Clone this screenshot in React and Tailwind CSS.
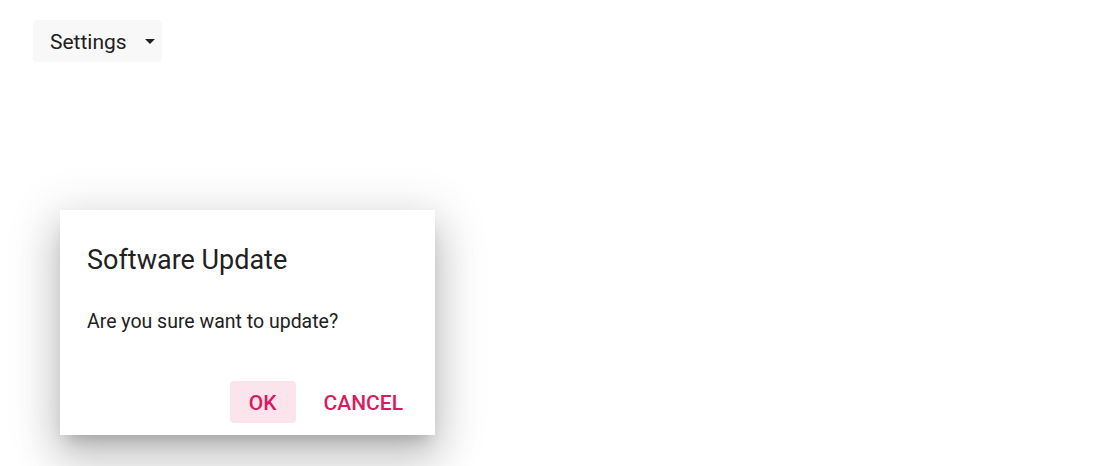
import { memo } from 'react';

const font = { fontFamily: 'Roboto, "Liberation Sans", sans-serif' };

// caret for the dropdown trigger
const Caret = () => (
  <svg width="10" height="5" viewBox="0 0 10 5" className="ml-[18px]">
    <path d="M0 0 L10 0 L5 5 Z" fill="#212121" />
  </svg>
);

const UpdateDialog = memo(() => (
  <div className="w-[375px] h-[225px] bg-white flex flex-col shadow-[0_11px_15px_-7px_rgba(0,0,0,0.2),0_24px_38px_3px_rgba(0,0,0,0.14),0_9px_46px_8px_rgba(0,0,0,0.12)]">
    <h2 className="pt-[34px] px-[27px] text-[27px] leading-[32px] text-[#212121]">Software Update</h2>
    <p className="mt-[33px] px-[27px] text-[19.5px] leading-[26px] text-[#212121]">Are you sure want to update?</p>
    <div className="mt-auto pb-[12px] pr-[13px] flex justify-end gap-[9px]">
      <button className="h-[42px] pt-[3px] px-[19px] rounded bg-[#fce4ec] text-[#d81b60] text-[21px] font-medium">OK</button>
      <button className="h-[42px] pt-[3px] px-[19px] rounded text-[#d81b60] text-[21px] font-medium">CANCEL</button>
    </div>
  </div>
));

UpdateDialog.displayName = 'UpdateDialog';

export default function App() {
  return (
    <div className="w-[1106px] h-[466px] bg-white overflow-hidden" style={font}>
      <div className="pt-[20px] pl-[33px]">
        <button className="h-[42px] pl-[17px] pr-[7px] bg-[#f8f8f8] rounded-sm flex items-center text-[21px] text-[#212121]">
          <span className="pt-[3px]">Settings</span>
          <Caret />
        </button>
      </div>
      <div className="mt-[148px] ml-[60px]">
        <UpdateDialog />
      </div>
    </div>
  );
}
